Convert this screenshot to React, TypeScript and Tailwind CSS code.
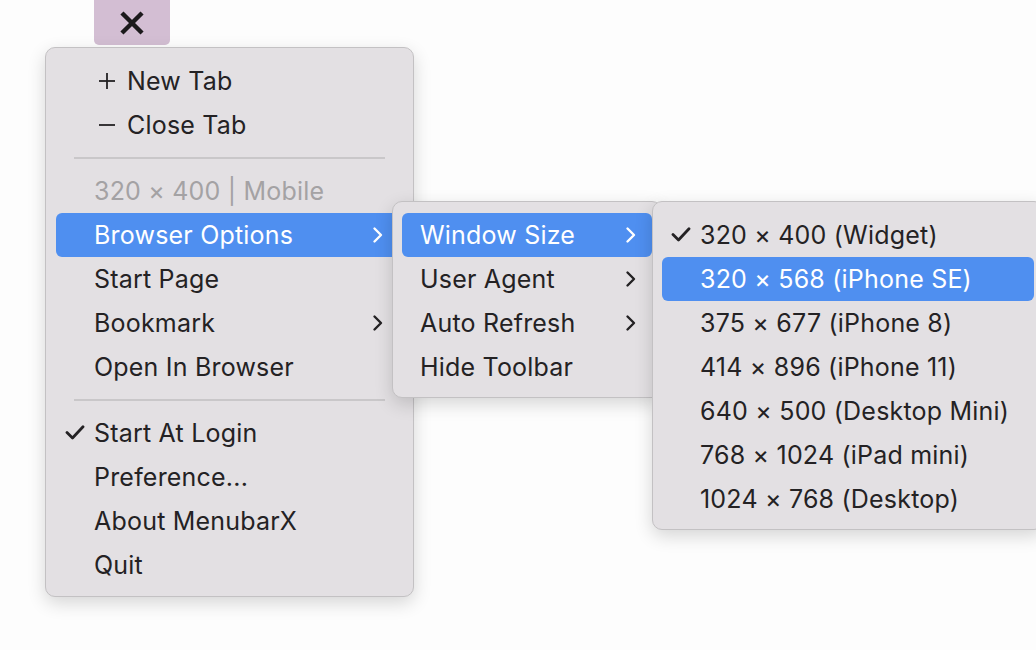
import React from 'react'

type Item = {
  label: string
  sub?: boolean
  check?: boolean
  active?: boolean
  disabled?: boolean
  icon?: 'plus' | 'minus'
  sep?: boolean
}

const mainItems: Item[] = [
  { label: 'New Tab', icon: 'plus' },
  { label: 'Close Tab', icon: 'minus' },
  { label: '', sep: true },
  { label: '320 × 400 | Mobile', disabled: true },
  { label: 'Browser Options', sub: true, active: true },
  { label: 'Start Page' },
  { label: 'Bookmark', sub: true },
  { label: 'Open In Browser' },
  { label: '', sep: true },
  { label: 'Start At Login', check: true },
  { label: 'Preference...' },
  { label: 'About MenubarX' },
  { label: 'Quit' },
]

const browserItems: Item[] = [
  { label: 'Window Size', sub: true, active: true },
  { label: 'User Agent', sub: true },
  { label: 'Auto Refresh', sub: true },
  { label: 'Hide Toolbar' },
]

const sizeItems: Item[] = [
  { label: '320 × 400 (Widget)', check: true },
  { label: '320 × 568 (iPhone SE)', active: true },
  { label: '375 × 677 (iPhone 8)' },
  { label: '414 × 896 (iPhone 11)' },
  { label: '640 × 500 (Desktop Mini)' },
  { label: '768 × 1024 (iPad mini)' },
  { label: '1024 × 768 (Desktop)' },
]

function Chevron() {
  return (
    <svg width="12" height="18" viewBox="0 0 12 18" fill="none" stroke="currentColor" strokeWidth="2.4" strokeLinecap="round" strokeLinejoin="round">
      <path d="M2.5 2.5 L9 9 L2.5 15.5" />
    </svg>
  )
}

function Check() {
  return (
    <svg width="20" height="15" viewBox="0 0 20 15" fill="none" stroke="currentColor" strokeWidth="2.8" strokeLinecap="round" strokeLinejoin="round">
      <path d="M2 7.5 L7.5 13 L18 1.8" />
    </svg>
  )
}

function Glyph({ kind }: { kind: 'plus' | 'minus' }) {
  return (
    <svg width="18" height="18" viewBox="0 0 18 18" fill="none" stroke="currentColor" strokeWidth="1.8">
      <path d="M1 9 H17" />
      {kind === 'plus' && <path d="M9 1 V17" />}
    </svg>
  )
}

function Row({ item, textPad, chevPad }: { item: Item; textPad: string; chevPad: string }) {
  if (item.sep) {
    return <div className="h-[22px] flex items-center px-[18px]"><div className="h-[2px] w-full bg-[#c9c7c9]" /></div>
  }
  const color = item.active ? 'bg-[#4f8ff0] text-white' : item.disabled ? 'text-[#a4a2a4]' : 'text-[#242224]'
  return (
    <div className={`relative h-[44px] flex items-center rounded-[6px] ${color}`}>
      {item.check && <span className="absolute left-[9px] top-[14px]"><Check /></span>}
      {item.icon && <span className="absolute left-[42px] top-[13px]"><Glyph kind={item.icon} /></span>}
      <span className={`${textPad} ${item.icon ? 'ml-[33px]' : ''} whitespace-nowrap`}>{item.label}</span>
      {item.sub && <span className={`ml-auto ${chevPad}`}><Chevron /></span>}
    </div>
  )
}

const panel = 'rounded-[10px] bg-[#e3e0e3] border border-[#c3c1c3] shadow-[0_6px_18px_rgba(0,0,0,0.16)]'

export default function App() {
  return (
    <div className="relative w-[1036px] h-[650px] overflow-hidden bg-[#fdfdfd] text-[25px] leading-none tracking-[0.2px]" style={{ fontFamily: 'Inter, "Noto Sans", sans-serif' }}>
      {/* status bar button */}
      <div className="ml-[94px] w-[76px] h-[45px] rounded-b-[5px] bg-[#d3bed3] flex items-center justify-center">
        <svg width="24" height="24" viewBox="0 0 24 24" fill="none" stroke="#1c1a1c" strokeWidth="4.4" strokeLinecap="square">
          <path d="M3.5 3.5 L9.5 9.5 M14.5 14.5 L20.5 20.5 M20.5 3.5 L14.5 9.5 M9.5 14.5 L3.5 20.5" />
          <path d="M9 9 L15 15 M15 9 L9 15" strokeWidth="2.6" strokeLinecap="butt" />
        </svg>
      </div>

      {/* main menu */}
      <div className={`ml-[45px] mt-[2px] w-[369px] pt-[11px] pb-[9px] px-[10px] ${panel}`}>
        {mainItems.map((it, i) => (
          <Row key={i} item={it} textPad="pl-[38px]" chevPad="pr-[19px]" />
        ))}
      </div>

      {/* browser options submenu */}
      <div className={`absolute left-[392px] top-[201px] w-[270px] pt-[11px] pb-[8px] px-[9px] ${panel}`}>
        {browserItems.map((it, i) => (
          <Row key={i} item={it} textPad="pl-[18px]" chevPad="pr-[15px]" />
        ))}
      </div>

      {/* window size submenu */}
      <div className={`absolute left-[652px] top-[201px] w-[392px] pt-[11px] pb-[8px] px-[9px] ${panel}`}>
        {sizeItems.map((it, i) => (
          <Row key={i} item={it} textPad="pl-[38px]" chevPad="pr-[20px]" />
        ))}
      </div>
    </div>
  )
}
